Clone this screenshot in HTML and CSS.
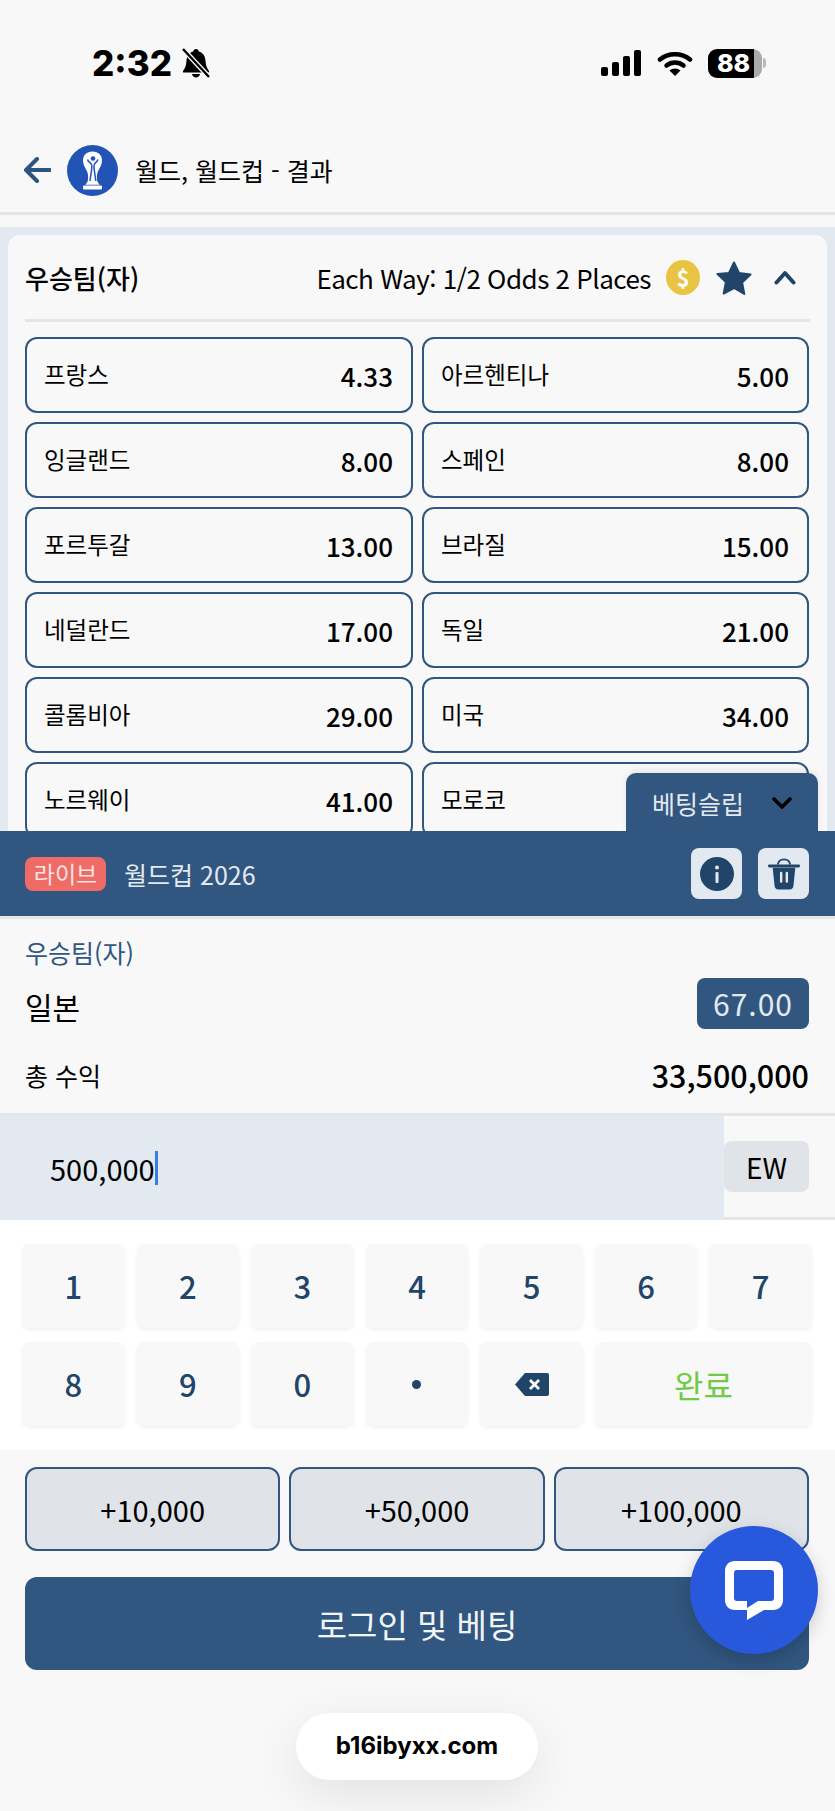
FILE: index.html
```html
<!DOCTYPE html>
<html lang="ko">
<head>
<meta charset="utf-8">
<title>우승팀(자)</title>
<link rel="stylesheet" href="styles.css">
</head>
<body>
<div class="page">
  <div class="status">
    <div class="status-left">
      <span class="time">2:32</span>
      <svg class="bell" viewBox="0 0 30 30"><path d="M15 1c1.600 0 2.600 1 2.800 2.400C22 4.600 24.200 8 24.500 12.500c.3 4.500 1 7 3.500 10.500v1.500H2V23c2.500-3.500 3.200-6 3.500-10.500C5.800 8 8 4.600 12.200 3.400 12.400 2 13.400 1 15 1zM11 26h8c-.3 2-2 3.500-4 3.500S11.300 28 11 26z"/><path d="M2 1l26 28" stroke="#f8f8f8" stroke-width="5"/><path d="M2 1l26 28" stroke="#000" stroke-width="2.400"/></svg>
    </div>
    <div class="status-right">
      <svg class="signal" viewBox="0 0 41 26"><rect x="0" y="17" width="7" height="9" rx="2"/><rect x="11" y="12" width="7" height="14" rx="2"/><rect x="22" y="6" width="7" height="20" rx="2"/><rect x="33" y="0" width="7" height="26" rx="2"/></svg>
      <svg class="wifi" viewBox="0 0 36 26"><path d="M3 9.500C11 2.500 25 2.500 33 9.500" fill="none" stroke="#000" stroke-width="4.500" stroke-linecap="round"/><path d="M9.500 15.500c5-4 12-4 17 0" fill="none" stroke="#000" stroke-width="4.500" stroke-linecap="round"/><path d="M12.500 20.500c3-2.800 8-2.800 11 0L18 26z"/></svg>
      <div class="battery"><span class="battery-level">88</span><span class="battery-cap"></span></div>
    </div>
  </div>

  <div class="topbar">
    <svg class="back" viewBox="0 0 27 26"><path d="M13 2L2 13l11 11M3 13h23" fill="none" stroke="#2b5480" stroke-width="4" stroke-linecap="round" stroke-linejoin="round"/></svg>
    <svg class="trophy" viewBox="0 0 51 51"><circle cx="25.500" cy="25.500" r="25.500" fill="#2154b4"/><path d="M25.500 6.500c5.800 0 9.500 3.800 9.500 8.800 0 4.500-2.300 7.500-4 11-1.400 3-1.500 7.500-.5 10.500l2 3h-14l2-3c1-3 .9-7.500-.5-10.500-1.700-3.500-4-6.500-4-11 0-5 3.700-8.800 9.500-8.800z" fill="#fff"/><circle cx="26" cy="13.500" r="2.300" fill="#2154b4"/><path d="M20.500 14.500c1 3 3.800 3 4.300 6 .3 3-1 9-1.800 15.500M31 14.500c-1 3-3.500 3-4 6-.3 3 1 9 1.800 15.500" fill="none" stroke="#2154b4" stroke-width="1.500"/><rect x="16" y="40.500" width="19" height="4" rx="1" fill="#fff"/></svg>
    <span class="crumb">월드, 월드컵 - 결과</span>
  </div>
  <div class="topgap"></div>

  <main class="market-area">
    <section class="market">
      <div class="market-head">
        <h2 class="market-title">우승팀(자)</h2>
        <div class="market-tools">
          <span class="each-way">Each Way: 1/2 Odds 2 Places</span>
          <span class="coin">$</span>
          <svg class="star" viewBox="0 0 36 34"><path d="M18 1.500l5 10.500 11.500 1.500-8.400 8 2.200 11.500L18 27l-10.300 5.500L9.900 21l-8.400-8L13 12z" fill="#214469" stroke="#214469" stroke-width="2" stroke-linejoin="round"/></svg>
          <svg class="chev-up" viewBox="0 0 22 15"><path d="M2.500 12.500L11 3l8.500 9.500" fill="none" stroke="#214469" stroke-width="4" stroke-linecap="round" stroke-linejoin="round"/></svg>
        </div>
      </div>
      <div class="odds-grid">
        <button class="odd"><span class="odd-name">프랑스</span><span class="odd-val">4.33</span></button>
        <button class="odd"><span class="odd-name">아르헨티나</span><span class="odd-val">5.00</span></button>
        <button class="odd"><span class="odd-name">잉글랜드</span><span class="odd-val">8.00</span></button>
        <button class="odd"><span class="odd-name">스페인</span><span class="odd-val">8.00</span></button>
        <button class="odd"><span class="odd-name">포르투갈</span><span class="odd-val">13.00</span></button>
        <button class="odd"><span class="odd-name">브라질</span><span class="odd-val">15.00</span></button>
        <button class="odd"><span class="odd-name">네덜란드</span><span class="odd-val">17.00</span></button>
        <button class="odd"><span class="odd-name">독일</span><span class="odd-val">21.00</span></button>
        <button class="odd"><span class="odd-name">콜롬비아</span><span class="odd-val">29.00</span></button>
        <button class="odd"><span class="odd-name">미국</span><span class="odd-val">34.00</span></button>
        <button class="odd"><span class="odd-name">노르웨이</span><span class="odd-val">41.00</span></button>
        <button class="odd"><span class="odd-name">모로코</span></button>
      </div>
    </section>
  </main>

  <section class="slip">
    <div class="slip-tab">
      <span>베팅슬립</span>
      <svg class="chev-down" viewBox="0 0 20 13"><path d="M2 2l8 8 8-8" fill="none" stroke="#000" stroke-width="3.600" stroke-linecap="round" stroke-linejoin="round"/></svg>
    </div>
    <div class="slip-head">
      <span class="live">라이브</span>
      <span class="slip-event">월드컵 2026</span>
      <div class="slip-actions">
        <button class="icon-btn"><svg class="ico" viewBox="0 0 34 34"><circle cx="17" cy="17" r="17" fill="#214469"/><circle cx="17" cy="10.500" r="2" fill="#e3e9f0"/><rect x="15.500" y="15" width="3" height="11" rx="1" fill="#e3e9f0"/></svg></button>
        <button class="icon-btn"><svg class="ico" viewBox="0 0 34 36"><path d="M1.500 9.500h31" stroke="#214469" stroke-width="3" stroke-linecap="round"/><path d="M10.500 8c.5-3.500 3-5.500 6.500-5.500s6 2 6.500 5.500" fill="none" stroke="#214469" stroke-width="2"/><path d="M5 11.500h24l-2 19c-.2 2.500-1.800 4-4 4H11c-2.200 0-3.800-1.500-4-4z" fill="#214469"/><path d="M14 17v9M20 17v9" stroke="#e3e9f0" stroke-width="2.600" stroke-linecap="round"/></svg></button>
      </div>
    </div>
    <div class="slip-body">
      <div class="slip-market">우승팀(자)</div>
      <div class="slip-row pick-row">
        <span class="pick">일본</span>
        <span class="pick-odd">67.00</span>
      </div>
      <div class="slip-row return-row">
        <span class="return-label">총 수익</span>
        <span class="return-val">33,500,000</span>
      </div>
    </div>
    <div class="stake-row">
      <div class="stake-input"><span class="stake-value">500,000</span><span class="caret"></span></div>
      <div class="ew-wrap"><button class="ew">EW</button></div>
    </div>
    <div class="keypad">
      <button class="key">1</button>
      <button class="key">2</button>
      <button class="key">3</button>
      <button class="key">4</button>
      <button class="key">5</button>
      <button class="key">6</button>
      <button class="key">7</button>
      <button class="key">8</button>
      <button class="key">9</button>
      <button class="key">0</button>
      <button class="key"><span class="dot"></span></button>
      <button class="key"><svg class="del" viewBox="0 0 34 23"><path d="M10 0h22c1.200 0 2 .8 2 2v19c0 1.200-.8 2-2 2H10L0 11.500z" fill="#214469"/><path d="M15 7l9 9M24 7l-9 9" stroke="#fff" stroke-width="2.800"/></svg></button>
      <button class="key key-done">완료</button>
    </div>
    <div class="slip-foot">
      <div class="quick">
        <button class="quick-btn">+10,000</button>
        <button class="quick-btn">+50,000</button>
        <button class="quick-btn">+100,000</button>
      </div>
      <button class="login">로그인 및 베팅</button>
    </div>
  </section>

  <button class="chat" aria-label="chat"><svg class="chat-ico" viewBox="0 0 58 59"><path fill="#fff" fill-rule="evenodd" d="M10 0h38c6 0 10 4 10 10v29c0 6-4 10-10 10H39L22 59V49H10C4 49 0 45 0 39V10C0 4 4 0 10 0zM12 9c-2 0-3 1-3 3v25c0 2 1 3 3 3h10v7l11-7h13c2 0 3-1 3-3V12c0-2-1-3-3-3z"/></svg></button>
  <div class="url-pill">b16ibyxx.com</div>
</div>
</body>
</html>
```
FILE: styles.css
```css
* { box-sizing: border-box; }
html, body { margin: 0; padding: 0; }
body {
  width: 835px;
  height: 1811px;
  overflow: hidden;
  background: #f8f8f8;
  font-family: "Noto Sans CJK KR", "Noto Sans", sans-serif;
  color: #000;
}
button { font-family: inherit; color: inherit; border: 0; margin: 0; padding: 0; background: none; }
.page { position: relative; width: 835px; height: 1811px; display: flex; flex-direction: column; overflow: hidden; }

.status { height: 130px; display: flex; justify-content: space-between; align-items: flex-start; padding: 48px 69px 0 92px; flex: none; }
.status-left { display: flex; align-items: center; gap: 9px; height: 30px; }
.time { font-family: Inter, sans-serif; font-weight: 800; font-size: 35px; line-height: 30px; }
.bell { width: 30px; height: 30px; }
.status-right { display: flex; align-items: center; gap: 15px; height: 30px; }
.signal { width: 41px; height: 26px; margin-left: -2px; }
.wifi { width: 36px; height: 26px; }
.battery { display: flex; align-items: center; }
.battery-level { width: 54px; height: 29px; border-radius: 9px; background: linear-gradient(90deg, #000 86%, #aaa 86%); color: #fff; font-family: Inter, sans-serif; font-weight: 800; font-size: 25px; line-height: 29px; text-align: center; padding-right: 3px; }
.battery-cap { width: 3px; height: 10px; margin-left: 1px; border-radius: 0 3px 3px 0; background: #bbb; }

.topbar { height: 85px; flex: none; display: flex; align-items: center; padding: 0 0 2px 24px; border-bottom: 3px solid #e4e5e7; }
.back { width: 27px; height: 26px; }
.trophy { width: 51px; height: 51px; margin-left: 16px; }
.crumb { margin-left: 17px; font-size: 25px; line-height: 36px; }
.topgap { height: 12px; flex: none; }

.market-area { height: 604px; flex: none; overflow: hidden; background: #e3e9f0; padding: 8px 8px 0; }
.market { background: #f8f8f8; border-radius: 12px 12px 0 0; padding: 0 17px; height: 700px; }
.market-head { height: 87px; display: flex; align-items: center; justify-content: space-between; border-bottom: 3px solid #e4e5e7; padding-top: 1px; }
.market-title { margin: 0; font-size: 26px; font-weight: 500; line-height: 36px; }
.market-tools { display: flex; align-items: center; }
.each-way { font-size: 26px; line-height: 36px; letter-spacing: -0.5px; }
.coin { width: 34px; height: 35px; margin-left: 15px; border-radius: 50%; background: #e9c443; color: #fff; font-size: 22px; font-weight: 700; line-height: 35px; text-align: center; }
.star { width: 36px; height: 34px; margin-left: 16px; }
.chev-up { width: 22px; height: 15px; margin: 0 14px 0 22px; }
.odds-grid { display: grid; grid-template-columns: 388px 387px; column-gap: 9px; row-gap: 9px; margin-top: 15px; }
.odd { height: 76px; display: flex; align-items: center; justify-content: space-between; border: 2px solid #31567f; border-radius: 12px; padding: 0 18px 0 17px; background: #f8f8f8; }
.odd-name { font-size: 23.5px; line-height: 32px; margin-top: -2px; }
.odd-val { font-size: 26px; font-weight: 500; line-height: 36px; margin-top: 2px; }

.slip { position: relative; flex: none; }
.slip-tab { position: absolute; left: 626px; top: -58px; width: 192px; height: 58px; background: #31567f; color: #e3e9f0; border-radius: 10px 10px 0 0; display: flex; align-items: center; padding: 0 26px; justify-content: space-between; font-size: 25px; box-shadow: 0 -2px 6px rgba(0,0,0,.08); }
.slip-tab span { line-height: 34px; margin-top: 2px; }
.chev-down { width: 20px; height: 13px; margin-top: 2px; }
.slip-head { height: 85px; background: #31567f; display: flex; align-items: center; padding: 0 26px 0 25px; }
.live { width: 81px; height: 34px; border-radius: 8px; background: #ef6b65; color: #f8e4e3; font-size: 23px; line-height: 32px; text-align: center; }
.slip-event { margin-left: 18px; color: #e3e9f0; font-size: 25px; line-height: 36px; }
.slip-actions { margin-left: auto; display: flex; gap: 16px; }
.icon-btn { width: 51px; height: 51px; border-radius: 8px; background: #e3e9f0; display: flex; align-items: center; justify-content: center; }
.ico { width: 34px; height: 34px; }
.slip-body { height: 200px; padding: 0 26px 0 25px; border-top: 3px solid #e4e5e7; border-bottom: 3px solid #e4e5e7; }
.slip-market { margin-top: 15px; color: #31567f; font-size: 25px; line-height: 36px; }
.slip-row { display: flex; justify-content: space-between; align-items: center; }
.pick-row { height: 51px; margin-top: 8px; }
.pick { font-size: 30px; line-height: 40px; margin-top: 4px; }
.pick-odd { width: 112px; height: 51px; background: #31567f; color: #e3e9f0; border-radius: 8px; font-size: 30px; line-height: 50px; text-align: center; letter-spacing: 1px; }
.return-row { height: 44px; margin-top: 24px; }
.return-label { font-size: 25px; line-height: 36px; }
.return-val { font-size: 30.5px; font-weight: 500; line-height: 44px; }
.stake-row { display: flex; height: 104px; border-bottom: 3px solid #e4e5e7; }
.stake-input { width: 724px; background: #e3e9f0; border-bottom-left-radius: 6px; display: flex; align-items: center; padding-left: 50px; height: 104px; flex: none; }
.stake-value { font-size: 29px; line-height: 40px; }
.caret { width: 3px; height: 34px; background: #3b7ddd; }
.ew-wrap { flex: 1; display: flex; align-items: center; }
.ew { width: 85px; height: 51px; border-radius: 8px; background: #e0e3e8; font-size: 28px; line-height: 50px; }
.keypad { height: 230px; background: #fff; padding: 24px 23px 24px 22px; display: grid; grid-template-columns: repeat(7, 1fr); grid-template-rows: 84px 84px; gap: 14px 12px; }
.key { border-radius: 8px; background: #f8f8f8; color: #214469; font-size: 31px; font-weight: 500; line-height: 40px; box-shadow: 0 2px 4px rgba(0,0,0,.06); display: flex; align-items: center; justify-content: center; }
.key-done { grid-column: span 2; color: #6fcb45; font-size: 32px; font-weight: 400; }
.dot { width: 9px; height: 9px; border-radius: 50%; background: #214469; }
.del { width: 34px; height: 23px; }
.slip-foot { padding: 17px 26px 0 25px; }
.quick { display: grid; grid-template-columns: repeat(3, 1fr); gap: 9px; }
.quick-btn { height: 84px; border: 2px solid #31567f; border-radius: 12px; background: #e0e3e8; font-size: 29px; line-height: 40px; }
.login { display: block; width: 100%; height: 93px; margin-top: 26px; border-radius: 12px; background: #31567f; color: #f2f5f8; font-size: 33px; line-height: 46px; }

.chat { position: absolute; left: 690px; top: 1526px; width: 128px; height: 128px; border-radius: 50%; background: #2859dc; box-shadow: 0 6px 18px rgba(0,0,0,.18); display: flex; align-items: center; justify-content: center; }
.chat-ico { width: 58px; height: 59px; }
.url-pill { position: absolute; left: 296px; top: 1713px; width: 242px; height: 67px; border-radius: 34px; background: #fff; box-shadow: 0 14px 50px rgba(0,0,0,.09); font-family: Inter, sans-serif; font-weight: 700; font-size: 24px; line-height: 66px; text-align: center; }
```
